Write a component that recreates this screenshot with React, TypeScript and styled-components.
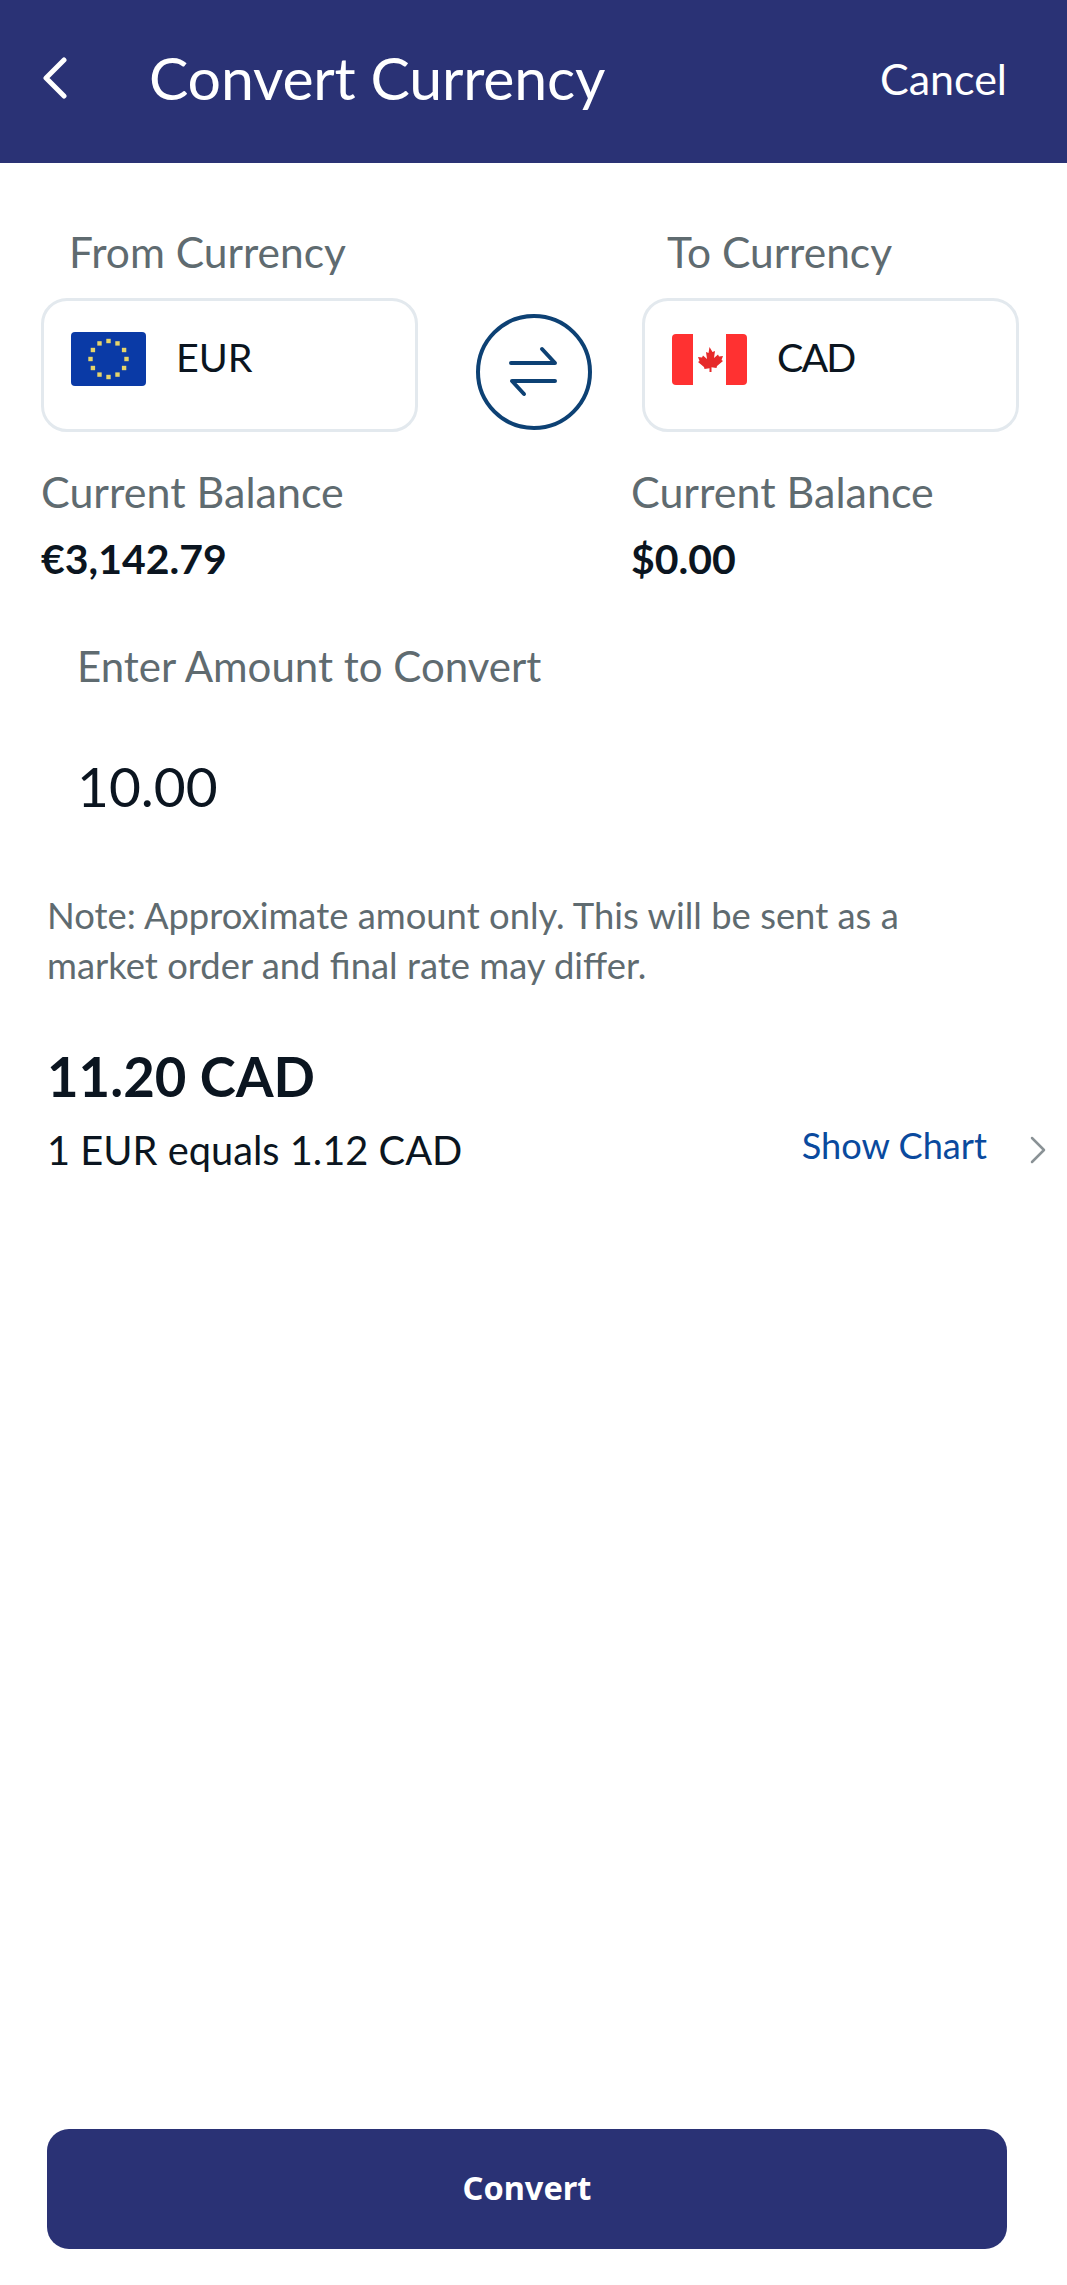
import React from "react";
import styled, { createGlobalStyle } from "styled-components";

const FONT = `"Lato", "Noto Sans", sans-serif`;

const Global = createGlobalStyle`
  html, body { margin: 0; padding: 0; background: #fff; }
  * { box-sizing: border-box; }
`;

const Page = styled.div`
  width: 1067px;
  min-height: 2285px;
  display: flex;
  flex-direction: column;
  font-family: ${FONT};
  background: #fff;
  color: #0b1520;
`;

const Header = styled.header`
  height: 163px;
  flex: none;
  background: #2a3275;
  color: #fff;
  display: flex;
  align-items: flex-start;
  padding: 46px 60px 0 42px;
`;

const BackButton = styled.button`
  all: unset;
  width: 30px;
  height: 64px;
  display: flex;
  align-items: center;
`;

const Title = styled.h1`
  margin: -1.5px 0 0 77px;
  font-size: 59px;
  font-weight: 400;
  line-height: 66px;
  letter-spacing: -0.2px;
  flex: 1;
`;

const CancelLink = styled.span`
  font-size: 43px;
  line-height: 66px;
  font-weight: 400;
`;

const Currencies = styled.section`
  padding: 59px 48px 0 41px;
  display: grid;
  grid-template-columns: 377px 224px 377px;
  row-gap: 16px;
`;

const FieldLabel = styled.div<{ $indent: number }>`
  font-size: 42.5px;
  line-height: 60px;
  color: #5f6b70;
  padding-left: ${(p) => p.$indent}px;
`;

const SelectBox = styled.div`
  height: 134px;
  border: 3px solid #e3e9ee;
  border-radius: 26px;
  display: flex;
  align-items: flex-start;
  gap: 30px;
  padding: 27px 0 0 27px;
`;

const CurrencyCode = styled.span<{ $tracking: number }>`
  font-size: 39.5px;
  line-height: 58px;
  letter-spacing: ${(p) => p.$tracking}px;
`;

const FlagSlot = styled.div`
  width: 75px;
  height: 54px;
  flex: none;
  margin-top: 4px;
`;

const SwapSlot = styled.div`
  display: flex;
  justify-content: center;
  padding: 16px 0 0 7px;
`;

const Balances = styled.section`
  display: flex;
  padding: 35px 0 0 41px;
`;

const BalanceBlock = styled.div`
  flex: 1;
  display: flex;
  flex-direction: column;
  gap: 17px;
  &:first-child {
    flex: 0 0 590px;
  }
`;

const BalanceLabel = styled.div`
  font-size: 43px;
  line-height: 50px;
  color: #5f6b70;
`;

const BalanceValue = styled.div`
  font-size: 41px;
  line-height: 50px;
  font-weight: 700;
  color: #0b1520;
`;

const AmountBlock = styled.section`
  padding: 57px 0 0 77px;
`;

const AmountLabel = styled.div`
  font-size: 42px;
  line-height: 50px;
  color: #5f6b70;
`;

const AmountValue = styled.div`
  margin-top: 60px;
  font-size: 55px;
  line-height: 70px;
  color: #0b1520;
`;

const Note = styled.p`
  margin: 69px 90px 0 47px;
  font-size: 36.4px;
  line-height: 50px;
  color: #5f6b70;
`;

const Result = styled.div`
  margin: 51px 0 0 47px;
  font-size: 54.5px;
  line-height: 70px;
  font-weight: 700;
  color: #0b1520;
`;

const RateRow = styled.div`
  margin-top: 14px;
  padding: 0 20px 0 47px;
  display: flex;
  align-items: center;
`;

const RateText = styled.div`
  font-size: 39.8px;
  line-height: 50px;
  flex: 1;
`;

const ChartLink = styled.a`
  font-size: 36.2px;
  line-height: 50px;
  color: #0a4a9e;
  margin-top: -10px;
`;

const ChevronSlot = styled.span`
  display: flex;
  margin-left: 42px;
`;

const Footer = styled.footer`
  margin-top: auto;
  padding: 0 60px 36px 47px;
`;

const ConvertButton = styled.button`
  display: block;
  width: 100%;
  height: 120px;
  border: 0;
  border-radius: 22px;
  padding: 0 0 3px;
  background: #2a3275;
  color: #fff;
  font-family: "Noto Sans", sans-serif;
  font-size: 32.5px;
  font-weight: 700;
`;

const euStars = Array.from({ length: 12 }, (_, i) => {
  const a = (i * Math.PI) / 6;
  return { x: 37.5 + 18 * Math.sin(a), y: 27 - 18 * Math.cos(a) };
});

const EuFlag = () => (
  <svg width="75" height="54" viewBox="0 0 75 54">
    <rect width="75" height="54" rx="4" fill="#0a3aa6" />
    {euStars.map((s, i) => (
      <rect key={i} x={s.x - 2.2} y={s.y - 2.2} width="4.4" height="4.4" fill="#e6d46a" />
    ))}
  </svg>
);

const CaFlag = () => (
  <svg width="75" height="54" viewBox="0 0 75 54">
    <rect y="2" width="75" height="51" rx="4" fill="#ff3131" />
    <rect x="21" y="2" width="33" height="51" fill="#fff" />
    <path
      d="M37.500 15l3 5 2.500-1-1 7 4-3.500 1 2 4-.5-1.500 4 1.500 1-6 5-.5 2-5-.7V40h-2v-3.700l-5 .7-.5-2-6-5 1.500-1-1.500-4 4 .5 1-2 4 3.500-1-7 2.500 1z"
      fill="#e62a2a"
    />
  </svg>
);

const SwapIcon = () => (
  <svg width="116" height="116" viewBox="0 0 116 116" fill="none" stroke="#0d4174" strokeWidth="4" strokeLinecap="round" strokeLinejoin="round">
    <circle cx="58" cy="58" r="56" />
    <path d="M35 49H79L66 35" />
    <path d="M79 67H36L48 80" />
  </svg>
);

const BackIcon = () => (
  <svg width="26" height="42" viewBox="0 0 26 42" fill="none" stroke="#fff" strokeWidth="5" strokeLinecap="round" strokeLinejoin="round">
    <path d="M22 3 4 21l18 18" />
  </svg>
);

const ChevronIcon = () => (
  <svg width="18" height="28" viewBox="0 0 18 28" fill="none" stroke="#8a9296" strokeWidth="2.500" strokeLinecap="round" strokeLinejoin="round">
    <path d="M3 2l12 12L3 26" />
  </svg>
);

export default function App() {
  return (
    <Page>
      <Global />
      <Header>
        <BackButton aria-label="Back"><BackIcon /></BackButton>
        <Title>Convert Currency</Title>
        <CancelLink>Cancel</CancelLink>
      </Header>

      <Currencies>
        <FieldLabel $indent={28}>From Currency</FieldLabel>
        <div />
        <FieldLabel $indent={25}>To Currency</FieldLabel>
        <SelectBox>
          <FlagSlot><EuFlag /></FlagSlot>
          <CurrencyCode $tracking={0}>EUR</CurrencyCode>
        </SelectBox>
        <SwapSlot><SwapIcon /></SwapSlot>
        <SelectBox>
          <FlagSlot><CaFlag /></FlagSlot>
          <CurrencyCode $tracking={-2}>CAD</CurrencyCode>
        </SelectBox>
      </Currencies>

      <Balances>
        <BalanceBlock>
          <BalanceLabel>Current Balance</BalanceLabel>
          <BalanceValue>€3,142.79</BalanceValue>
        </BalanceBlock>
        <BalanceBlock>
          <BalanceLabel>Current Balance</BalanceLabel>
          <BalanceValue>$0.00</BalanceValue>
        </BalanceBlock>
      </Balances>

      <AmountBlock>
        <AmountLabel>Enter Amount to Convert</AmountLabel>
        <AmountValue>10.00</AmountValue>
      </AmountBlock>

      <Note>Note: Approximate amount only. This will be sent as a market order and final rate may differ.</Note>

      <Result>11.20 CAD</Result>
      <RateRow>
        <RateText>1 EUR equals 1.12 CAD</RateText>
        <ChartLink>Show Chart</ChartLink>
        <ChevronSlot><ChevronIcon /></ChevronSlot>
      </RateRow>

      <Footer>
        <ConvertButton>Convert</ConvertButton>
      </Footer>
    </Page>
  );
}
